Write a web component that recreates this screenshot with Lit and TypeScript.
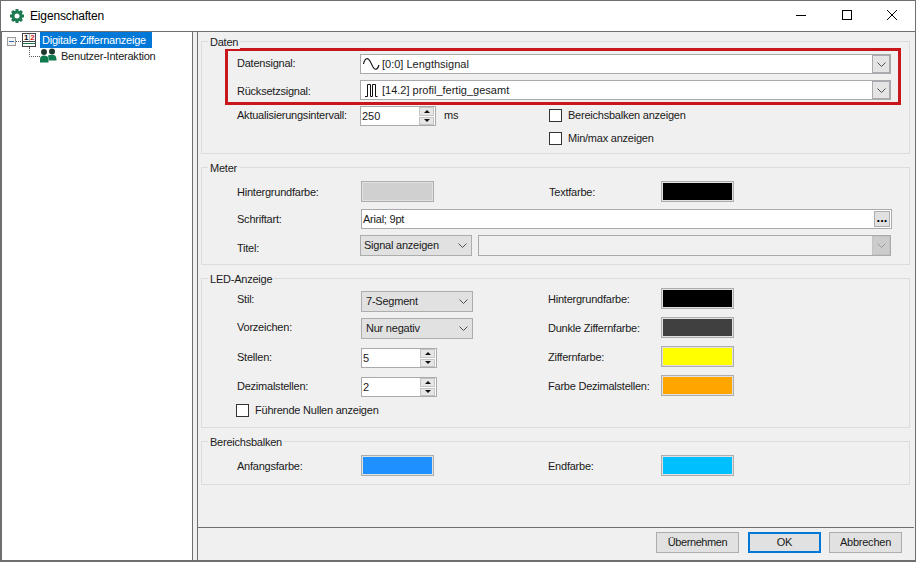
import { LitElement, html, css, svg } from "lit";
import { customElement } from "lit/decorators.js";

const chevron = (c = "#505050") => html`<svg class="chev" width="9" height="5" viewBox="0 0 9 5"><path d="M0.5 0.5 L4.5 4.5 L8.5 0.5" fill="none" stroke="${c}" stroke-width="1"/></svg>`;

const sine = html`<svg class="sig" width="17" height="14" viewBox="0 0 17 14"><path d="M0.5 7 C2 0.5 5 0.5 7 4 L10 10 C12 13.5 14.5 13 16 8" fill="none" stroke="#111" stroke-width="1.1"/></svg>`;
const pulse = html`<svg class="sig" width="17" height="14" viewBox="0 0 17 14"><path d="M2 13.5 H4.5 V1.5 H7.5 V13.5 H9.5 V1.5 H12.5 V13.5 H14.5" fill="none" stroke="#111" stroke-width="1"/></svg>`;

const gear = html`<svg width="14" height="14" viewBox="0 0 14 14">
  <circle cx="7" cy="7" r="4" fill="none" stroke="#1c7a50" stroke-width="3"/>
  ${[0, 45, 90, 135, 180, 225, 270, 315].map(a => svg`<rect x="5.5" y="0" width="3" height="3" fill="#1c7a50" transform="rotate(${a} 7 7)"/>`)}
</svg>`;

const treeRow1 = html`<svg width="38" height="16" viewBox="2 32 38 16">
  <rect x="7.5" y="37.5" width="8" height="8" fill="#f4f4f4" stroke="#9a9a9a"/>
  <path d="M9 41.5 H14" stroke="#3a6db5" stroke-width="1"/>
  <path d="M16 41.5 H22" stroke="#555" stroke-dasharray="1 1"/>
  <rect x="22.5" y="33.5" width="13" height="13" fill="#fff" stroke="#444"/>
  <path d="M29.5 34 V41" stroke="#bbb"/>
  <path d="M23 41.5 H35" stroke="#444"/>
  <path d="M23 43.5 H35" stroke="#1c7a50" stroke-width="1"/>
  <text x="24" y="40.4" font-family="Liberation Sans" font-weight="700" font-size="8" letter-spacing="0" fill="#111">1</text>
  <text x="30.2" y="40.4" font-family="Liberation Sans" font-weight="700" font-size="8" letter-spacing="0" fill="#d81818">2</text>
  <path d="M29.5 47 V48" stroke="#555"/>
</svg>`;

const treeRow2 = html`<svg width="57" height="16" viewBox="2 48 57 16">
  <path d="M29.5 48 V56.5 H40" fill="none" stroke="#555" stroke-dasharray="1 1"/>
  <circle cx="44" cy="52" r="3" fill="#20392f"/>
  <circle cx="52" cy="51.6" r="3" fill="#20392f"/>
  <path d="M48 55.5 C50 54.5 54 54.5 55 55.5 C56 56.5 56.5 58 56.5 60.5 H49 Z" fill="#0f7a4e"/>
  <path d="M40 62.5 V59 C40 56.5 42 55.5 44 55.5 C46 55.5 48.5 56.5 48.5 59 V62.5 Z" fill="#0f7a4e"/>
</svg>`;

const spin = (v: string, cls = "") => html`<div class="spin ${cls}"><span class="val">${v}</span>
  <div class="spbtns"><div class="spb"><i class="up"></i></div><div class="spb"><i class="dn"></i></div></div></div>`;

const combo = (icon: unknown, text: string) => html`<div class="combo">${icon}<span class="ctext">${text}</span><div class="carrow">${chevron()}</div></div>`;

const drop = (text: string, cls = "") => html`<div class="drop ${cls}"><span>${text}</span>${chevron()}</div>`;

const swatch = (color: string) => html`<div class="swatch"><div class="fill" style="background:${color}"></div></div>`;

const check = (label: string) => html`<div class="chk"><span class="box"></span><span>${label}</span></div>`;

@customElement("app-root")
export class AppRoot extends LitElement {
  static styles = css`
    :host { display: block; width: 916px; height: 562px; box-sizing: border-box; background: #f0f0f0;
      border: 1px solid #6f6f6f; border-bottom-width: 2px; font: 11px/13px "Liberation Sans", Arial, sans-serif; letter-spacing: -0.23px; color: #1a1a1a; overflow: hidden; }
    * { box-sizing: border-box; }
    .title { height: 31px; background: #fff; border-bottom: 1px solid #6f6f6f; display: flex; align-items: center; padding-left: 9px; }
    .title .cap { margin-left: 6px; font-size: 12px; letter-spacing: -0.15px; color: #000; flex: 1; }
    .wb { width: 46px; height: 30px; display: flex; align-items: center; justify-content: center; padding-bottom: 2px; }
    .wb:last-child { width: 45px; padding-right: 1px; }
    .body { display: flex; height: 528px; }
    .tree { width: 192px; background: #fff; border: 1px solid #6f6f6f; border-width: 0 1px 0 1px; flex: none; }
    .trow { display: flex; align-items: center; height: 16px; }
    .trow svg { flex: none; display: block; }
    .sel { background: #0078d7; color: #fff; height: 16px; width: 112px; padding-left: 2px; line-height: 16px; white-space: nowrap; }
    .sub { margin-left: 2px; color: #1a1a1a; white-space: nowrap; }
    .main { margin-left: 4px; width: 717px; border-left: 1px solid #6f6f6f; display: flex; flex-direction: column; }
    .content { height: 496px; border-bottom: 1px solid #6f6f6f; padding: 9px 4px 0 3px; display: flex; flex-direction: column; gap: 13px; }
    .group { position: relative; border: 1px solid #dcdcdc; flex: none; }
    .legend { position: absolute; left: 6px; top: -6px; background: #f0f0f0; padding: 0 2px; color: #1a1a1a; }
    .g1 { padding: 6px 0 8px; }
    .g2 { padding: 13px 0 8px; }
    .g3 { padding: 0 0 10px; display: flex; }
    .g4 { padding: 13px 0 8px; }
    .red { margin: 0 8px 0 23px; border: 3px solid #c8171c; padding: 3px 0 2px 9px; display: flex; flex-direction: column; gap: 6px; }
    .redrow { display: flex; align-items: center; }
    .row { display: flex; align-items: center; margin-left: 35px; }
    .lbl { width: 123px; flex: none; white-space: nowrap; }
    .cell { width: 188px; flex: none; display: flex; align-items: center; }
    .lbl2 { width: 113px; flex: none; white-space: nowrap; }
    .pl1 { padding-left: 1px; }
    .ind { margin-left: 1px; }
    .combo { width: 531px; height: 20px; background: #fff; border: 1px solid #a9a9ae; display: flex; align-items: center; padding-left: 2px; }
    .sig { flex: none; margin-right: 2px; }
    .ctext { flex: 1; white-space: nowrap; letter-spacing: 0; }
    .carrow { width: 18px; height: 18px; border: 1px solid #a9a9ae; background: #e4e4e4; display: flex; align-items: center; justify-content: center; }
    .chev { flex: none; }
    .spin { width: 76px; height: 20px; background: #fff; border: 1px solid #a9a9ae; display: flex; align-items: center; padding-left: 1px; }
    .spin .val { flex: 1; letter-spacing: 0; }
    .spbtns { width: 15px; height: 18px; display: flex; flex-direction: column; gap: 1px; margin-right: 1px; }
    .spb { flex: 1; background: #e6e6e6; border: 1px solid #c4c4c4; display: flex; align-items: center; justify-content: center; }
    .up { width: 0; height: 0; border: 3px solid transparent; border-top-width: 0; border-bottom: 3px solid #111; }
    .dn { width: 0; height: 0; border: 3px solid transparent; border-bottom-width: 0; border-top: 3px solid #111; }
    .msp { margin-left: 8px; }
    .chk { display: flex; align-items: center; white-space: nowrap; }
    .box { width: 13px; height: 13px; border: 1px solid #333; background: #fff; margin-right: 6px; flex: none; }
    .chk1 { margin: 0 0 1px 1px; }
    .swatch { width: 73px; height: 21px; border: 1px solid #adadad; padding: 1px; background: #e1e1e1; flex: none; }
    .fill { width: 100%; height: 100%; }
    .fontbox { width: 531px; height: 20px; background: #fff; border: 1px solid #a9a9ae; display: flex; align-items: center; padding-left: 1px; margin-left: 1px; }
    .fontbox span { flex: 1; }
    .dots { width: 16px; height: 16px; margin-right: 1px; background: #e1e1e1; border: 1px solid #adadad; font-weight: 700; font-size: 13px; letter-spacing: 0; line-height: 12px; text-align: center; color: #000; }
    .drop { width: 112px; height: 21px; background: #e1e1e1; border: 1px solid #adadad; display: flex; align-items: center; justify-content: space-between; padding: 0 4px 0 3px; flex: none; white-space: nowrap; }
    .ind .drop { padding-left: 4px; }
    .disabled { width: 413px; height: 21px; background: #f0f0f0; border: 1px solid #a9a9ae; margin-left: 6px; display: flex; justify-content: flex-end; flex: none; }
    .disabled .carrow { height: 19px; background: #ccc; border-color: #c4c4c4; }
    .col { display: flex; flex-direction: column; flex: none; }
    .leftcol { width: 346px; padding: 12px 0 0 35px; }
    .leftcol .row { margin-left: 0; }
    .leftcol .row + .row { margin-top: 6px; }
    .leftcol .r2 { margin-top: 9px !important; }
    .rightcol { padding-top: 9px; gap: 8px; }
    .rightcol .row { margin-left: 0; }
    .pb5 { padding-bottom: 5px; }
    .pb3 { padding-bottom: 3px; }
    .pb2 { padding-bottom: 2px; }
    .pt2 { padding-top: 2px; }
    .pt6 { padding-top: 6px; }
    .ledchk { margin: 7px 0 0 -1px; }
    .footer { flex: 1; display: flex; justify-content: flex-end; padding: 4px 12px 0 0; gap: 8px; }
    .btn { width: 73px; height: 21px; background: #e1e1e1; border: 1px solid #adadad; display: flex; align-items: center; justify-content: center; color: #1a1a1a; }
    .btn.wide { width: 83px; margin-right: 1px; letter-spacing: -0.4px; }
    .btn.def { border: 2px solid #0078d7; }
    .chk2 { margin-left: 347px; margin-top: 6px; }
    .mt1 { margin-top: 1px; }
    .mt7 { margin-top: 7px; }
    .mt6 { margin-top: 6px; }
  `;

  render() {
    return html`
      <div class="title">
        ${gear}<span class="cap">Eigenschaften</span>
        <div class="wb"><svg width="10" height="10" viewBox="0 0 10 10"><path d="M0 5.5 H10" stroke="#000"/></svg></div>
        <div class="wb"><svg width="10" height="10" viewBox="0 0 10 10"><rect x="0.5" y="0.5" width="9" height="9" fill="none" stroke="#000"/></svg></div>
        <div class="wb"><svg width="10" height="10" viewBox="0 0 10 10"><path d="M0 0 L10 10 M10 0 L0 10" stroke="#000" stroke-width="1"/></svg></div>
      </div>
      <div class="body">
        <div class="tree">
          <div class="trow">${treeRow1}<span class="sel">Digitale Ziffernanzeige</span></div>
          <div class="trow">${treeRow2}<span class="sub">Benutzer-Interaktion</span></div>
        </div>
        <div class="main">
          <div class="content">
            <div class="group g1">
              <span class="legend">Daten</span>
              <div class="red">
                <div class="redrow"><span class="lbl pb2">Datensignal:</span>${combo(sine, "[0:0] Lengthsignal")}</div>
                <div class="redrow"><span class="lbl pt2">Rücksetzsignal:</span>${combo(pulse, "[14.2] profil_fertig_gesamt")}</div>
              </div>
              <div class="row mt1">
                <span class="lbl pb2">Aktualisierungsintervall:</span>
                <div class="cell">${spin("250")}<span class="msp pb2">ms</span></div>
                <div class="chk1">${check("Bereichsbalken anzeigen")}</div>
              </div>
              <div class="chk2">${check("Min/max anzeigen")}</div>
            </div>

            <div class="group g2">
              <span class="legend">Meter</span>
              <div class="row">
                <span class="lbl pt2">Hintergrundfarbe:</span>
                <div class="cell"><div class="ind">${swatch("#d0d0d0")}</div></div>
                <span class="lbl2 pl1 pt2">Textfarbe:</span>
                ${swatch("#000000")}
              </div>
              <div class="row mt7">
                <span class="lbl">Schriftart:</span>
                <div class="fontbox"><span>Arial; 9pt</span><div class="dots">...</div></div>
              </div>
              <div class="row mt6">
                <span class="lbl pt6">Titel:</span>
                ${drop("Signal anzeigen")}
                <div class="disabled"><div class="carrow">${chevron("#9a9a9a")}</div></div>
              </div>
            </div>

            <div class="group g3">
              <span class="legend">LED-Anzeige</span>
              <div class="col leftcol">
                <div class="row"><span class="lbl pb5">Stil:</span><div class="ind">${drop("7-Segment")}</div></div>
                <div class="row"><span class="lbl pb3">Vorzeichen:</span><div class="ind">${drop("Nur negativ")}</div></div>
                <div class="row r2"><span class="lbl pb2">Stellen:</span><div class="ind">${spin("5")}</div></div>
                <div class="row r2"><span class="lbl pb2">Dezimalstellen:</span><div class="ind">${spin("2")}</div></div>
                <div class="ledchk">${check("Führende Nullen anzeigen")}</div>
              </div>
              <div class="col rightcol">
                <div class="row"><span class="lbl2 pt2">Hintergrundfarbe:</span>${swatch("#000000")}</div>
                <div class="row"><span class="lbl2 pt2">Dunkle Ziffernfarbe:</span>${swatch("#404040")}</div>
                <div class="row"><span class="lbl2 pt2">Ziffernfarbe:</span>${swatch("#ffff00")}</div>
                <div class="row"><span class="lbl2 pt2">Farbe Dezimalstellen:</span>${swatch("#ffa500")}</div>
              </div>
            </div>

            <div class="group g4">
              <span class="legend">Bereichsbalken</span>
              <div class="row">
                <span class="lbl pt2">Anfangsfarbe:</span>
                <div class="cell"><div class="ind">${swatch("#1e90ff")}</div></div>
                <span class="lbl2 pt2">Endfarbe:</span>
                ${swatch("#00bfff")}
              </div>
            </div>
          </div>
          <div class="footer">
            <div class="btn wide">Übernehmen</div>
            <div class="btn def">OK</div>
            <div class="btn">Abbrechen</div>
          </div>
        </div>
      </div>
    `;
  }
}
